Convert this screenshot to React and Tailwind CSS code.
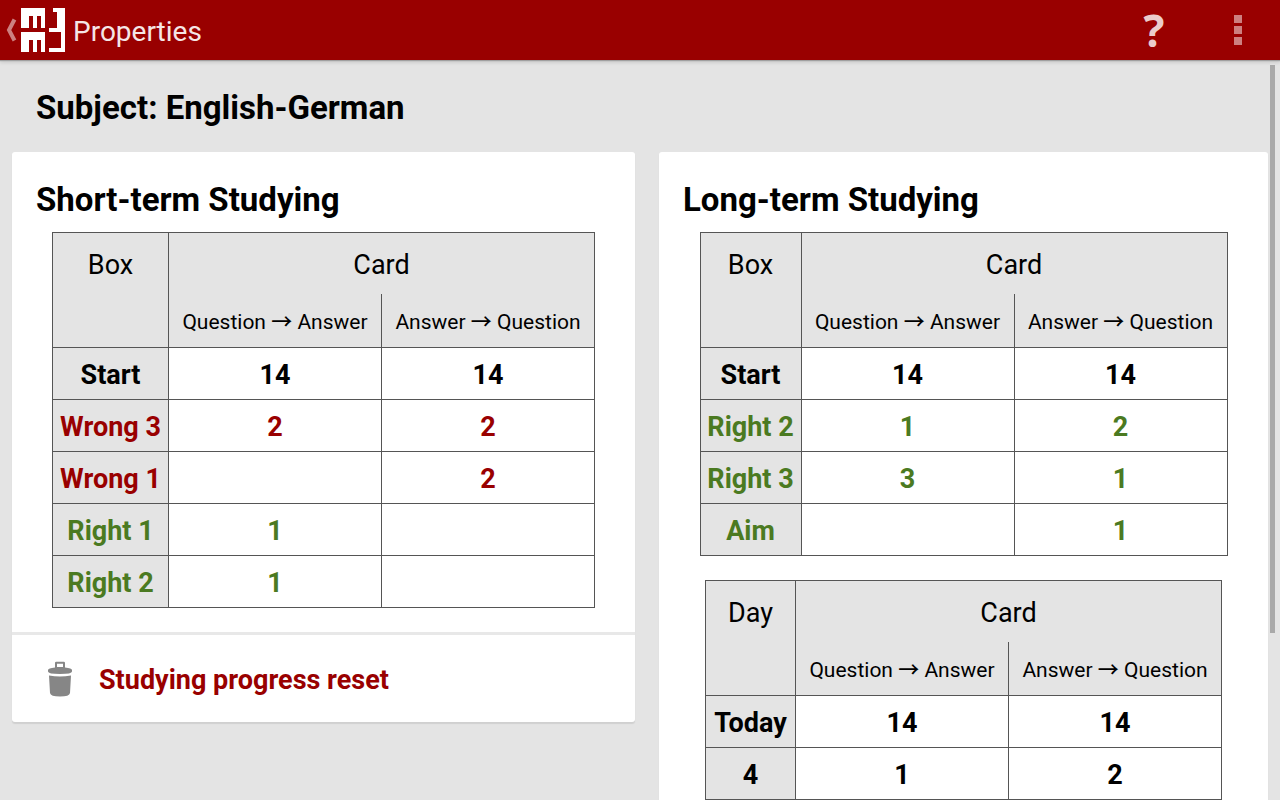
import React from "react";

const textColors = {
  neutral: "text-black",
  wrong: "text-[#990000]",
  right: "text-[#4b7a21]",
};

const shortTermRows = [
  { label: "Start", values: ["14", "14"], kind: "neutral" },
  { label: "Wrong 3", values: ["2", "2"], kind: "wrong" },
  { label: "Wrong 1", values: ["", "2"], kind: "wrong" },
  { label: "Right 1", values: ["1", ""], kind: "right" },
  { label: "Right 2", values: ["1", ""], kind: "right" },
];

const longTermRows = [
  { label: "Start", values: ["14", "14"], kind: "neutral" },
  { label: "Right 2", values: ["1", "2"], kind: "right" },
  { label: "Right 3", values: ["3", "1"], kind: "right" },
  { label: "Aim", values: ["", "1"], kind: "right" },
];

const dayRows = [
  { label: "Today", values: ["14", "14"], kind: "neutral" },
  { label: "4", values: ["1", "2"], kind: "neutral" },
];

function Logo() {
  return (
    <svg width="44" height="44" viewBox="0 0 11 11" fill="#fff" shapeRendering="crispEdges">
      <path d="M0 0h6v5h-1v-3h-1v3h-1v-3h-1v3h-2z" />
      <path d="M0 6h6v5h-1v-3h-1v3h-1v-3h-1v3h-2z" />
      <path d="M8 0h3v11h-4v-1h3v-4h-3v-1h2v-4h-1z" />
    </svg>
  );
}

function TrashIcon() {
  return (
    <svg width="24" height="36" viewBox="0 0 24 36" fill="#868686">
      <path
        fillRule="evenodd"
        d="M7 6.500V2q0-1.200 1.200-1.200h7.600q1.200 0 1.200 1.200v4.500q7 .8 7 2.500v1.500q0 2.500-12 2.500t-12-2.500v-1.500q0-1.700 7-2.500zM9 2.800v3.200h6V2.800z"
      />
      <path d="M1 14.500q11 2 22 0l-1 17.500q-.5 3.500-10 3.500t-10-3.500z" />
    </svg>
  );
}

function Header() {
  return (
    <header className="relative z-10 flex h-[60px] shrink-0 items-center justify-between bg-[#990000] shadow-[0_1px_1px_#a0a0a0,0_2px_4px_rgba(0,0,0,0.15)]">
      <button className="flex items-center pl-1" aria-label="Back">
        <svg width="17" height="24" viewBox="0 0 17 24" fill="none" stroke="#cd8080" strokeWidth="4">
          <path d="M10.500 1.500L5 12L10.500 22.500" />
        </svg>
        <Logo />
      </button>
      <h1 className="flex-1 pt-1 pl-2 text-[28px] text-[#f5e6e6]">Properties</h1>
      <button className="w-[84px] font-['Open_Sans'] text-[44px] leading-[60px] font-bold text-[#ebcccc]" aria-label="Help">
        ?
      </button>
      <button className="flex h-[60px] w-[84px] items-center justify-center" aria-label="More options">
        <svg width="8" height="30" viewBox="0 0 8 30" fill="#cd8080">
          <path d="M0 0h8v8H0zM0 11h8v8H0zM0 22h8v8H0z" />
        </svg>
      </button>
    </header>
  );
}

function Direction({ from, to }) {
  return (
    <>
      {from} <span className="font-['Noto_Sans_CJK_JP',sans-serif] leading-none font-medium">→</span> {to}
    </>
  );
}

function StudyTable({ title, rows, labelWidth, className }) {
  return (
    <table className={`mx-auto table-fixed border-collapse border border-[#555] text-center text-[27px] ${className}`}>
      <colgroup>
        <col className={labelWidth} />
        <col className="w-[213px]" />
        <col className="w-[213px]" />
      </colgroup>
      <thead className="bg-[#e4e4e4]">
        <tr className="h-[61px]">
          <th rowSpan={2} className="border border-[#555] pt-3 align-top leading-10 font-normal">
            {title}
          </th>
          <th colSpan={2} className="pt-3 align-top leading-10 font-normal">
            Card
          </th>
        </tr>
        <tr className="h-[54px] text-[21px]">
          <th className="border-r border-b border-[#555] pt-1 font-normal">
            <Direction from="Question" to="Answer" />
          </th>
          <th className="border-b border-[#555] pt-1 font-normal">
            <Direction from="Answer" to="Question" />
          </th>
        </tr>
      </thead>
      <tbody>
        {rows.map((row) => (
          <tr key={row.label} className={`h-[52px] font-bold ${textColors[row.kind]}`}>
            <th className="border border-[#555] bg-[#e4e4e4] pt-1">{row.label}</th>
            <td className="border border-[#555] pt-1">{row.values[0]}</td>
            <td className="border border-[#555] pt-1">{row.values[1]}</td>
          </tr>
        ))}
      </tbody>
    </table>
  );
}

function Card({ title, className, children }) {
  return (
    <section className={`rounded-[3px] bg-white shadow-[0_2px_1px_#d0d0d0] ${className}`}>
      <h2 className="mb-2 px-6 pt-6 text-[33px] leading-12 font-bold">{title}</h2>
      {children}
    </section>
  );
}

function App() {
  return (
    <div className="relative flex h-screen flex-col bg-[#e4e4e4] font-[Roboto,sans-serif] text-black">
      <Header />
      <main className="flex-1 overflow-y-auto px-3 pt-6 pb-3 [scrollbar-width:none]">
        <h2 className="mb-5 px-6 text-[33px] leading-12 font-bold">Subject: English-German</h2>
        <div className="flex items-start gap-6">
          <Card title="Short-term Studying" className="flex-none">
            <div className="px-10 pb-6">
              <StudyTable title="Box" rows={shortTermRows} labelWidth="w-[116px]" className="w-[543px]" />
            </div>
            <button className="flex h-[90px] w-full items-center gap-[27px] border-t-[3px] border-[#e8e8e8] px-9 text-[27px] font-bold text-[#990000]">
              <TrashIcon />
              <span className="pt-1">Studying progress reset</span>
            </button>
          </Card>
          <Card title="Long-term Studying" className="flex-1">
            <div className="flex flex-col gap-6 px-10 pb-6">
              <StudyTable title="Box" rows={longTermRows} labelWidth="w-[101px]" className="w-[528px]" />
              <StudyTable title="Day" rows={dayRows} labelWidth="w-[90px]" className="w-[517px]" />
            </div>
          </Card>
        </div>
      </main>
      {/* Scroll position indicator */}
      <div className="absolute top-[65px] right-[5px] h-[568px] w-[5px] bg-[#a9a9a9]" />
    </div>
  );
}

export default App;
